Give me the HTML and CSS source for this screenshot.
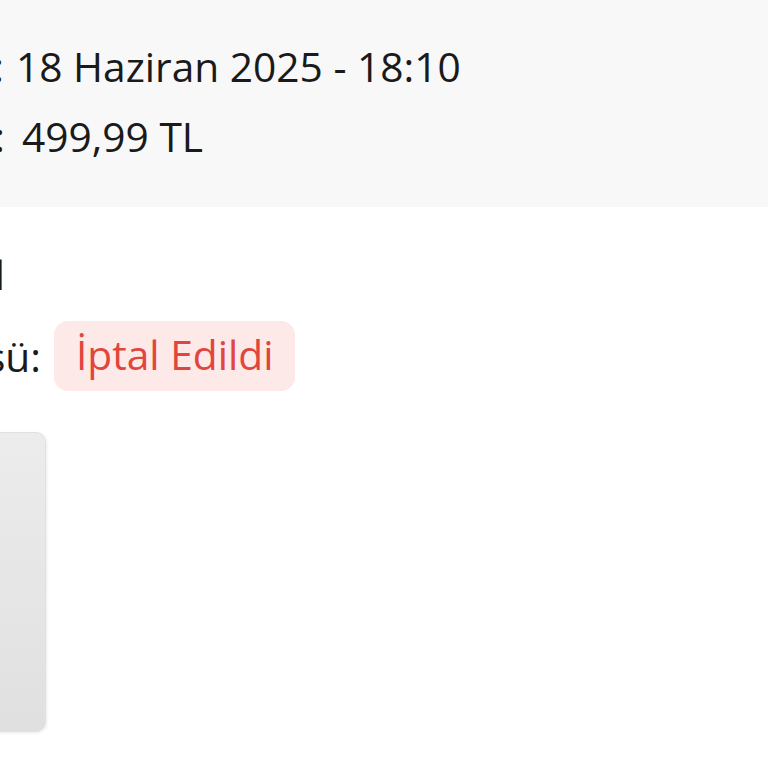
FILE: index.html
```html
<!DOCTYPE html>
<html lang="tr">
<head>
<meta charset="utf-8">
<title>Sipariş Detayı</title>
<link rel="stylesheet" href="styles.css">
</head>
<body>
<div class="page">
  <section class="summary">
    <div class="row"><span class="label label-date">Sipariş Tarihi:</span><span class="value">18 Haziran 2025 - 18:10</span></div>
    <div class="row"><span class="label label-total">Toplam Tutar:</span><span class="value value-total">499,99 TL</span></div>
  </section>
  <section class="details">
    <div class="row"><span class="label label-type">Teslimat Türü: Normal</span></div>
    <div class="row row-status"><span class="label label-status">Sipariş Statüsü:</span><span class="badge">İptal Edildi</span></div>
    <div class="product-card"></div>
  </section>
</div>
</body>
</html>
```
FILE: styles.css
```css
html, body {
  margin: 0;
  padding: 0;
  background: #ffffff;
  overflow: hidden;
}
.page {
  width: 768px;
  height: 768px;
  overflow: hidden;
  font-family: "Open Sans", "Noto Sans", sans-serif;
  font-size: 40.7px;
  color: #1a1a1a;
}
.summary {
  background: #f8f8f8;
  padding: 31px 0 36px 0;
}
.row {
  display: flex;
  align-items: center;
  height: 70px;
  line-height: 70px;
  white-space: nowrap;
}
.label {
  display: flex;
  justify-content: flex-end;
  overflow: hidden;
  flex: none;
}
.label-date { width: 4px; }
.label-total { width: 5px; }
.label-type { width: 5px; }
.label-status { width: 41px; }
.value { padding-left: 12px; }
.value-total { padding-left: 17px; }
.details {
  padding-top: 32px;
}
.row-status {
  margin-top: 12px;
}
.badge {
  margin-left: 13px;
  background: #fde9e7;
  color: #e0463d;
  border-radius: 14px;
  padding: 3px 22px 7px 22px;
  line-height: 60px;
}
.product-card {
  margin-top: 41px;
  margin-left: -200px;
  width: 244px;
  height: 298px;
  border: 1px solid #e0e0e0;
  border-radius: 10px;
  background: linear-gradient(180deg, #ececec 0%, #e0e0e0 100%);
  box-shadow: 1px 1px 3px rgba(0, 0, 0, 0.08);
}
```
